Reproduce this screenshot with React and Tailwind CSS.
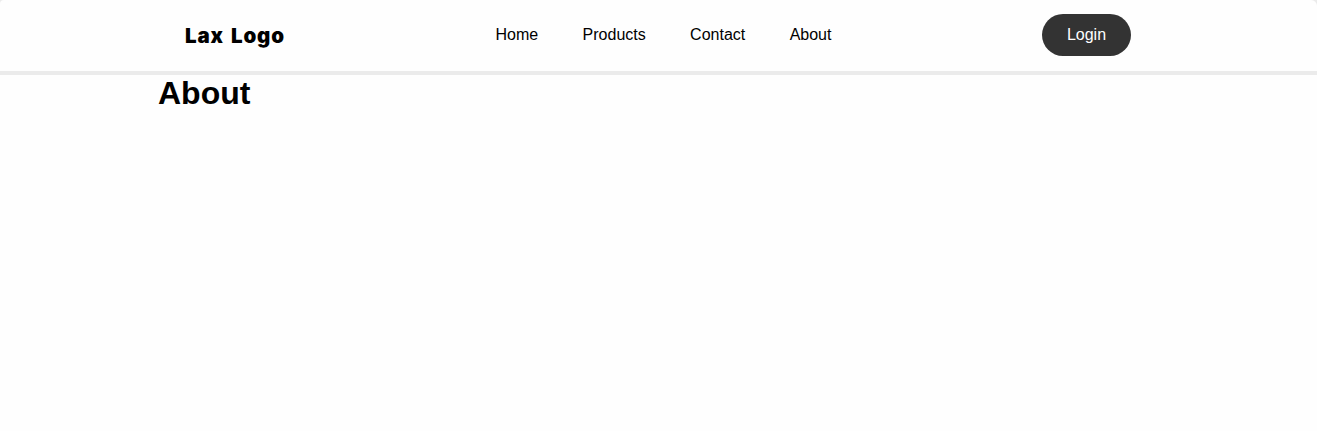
const links = ["Home", "Products", "Contact", "About"];

export default function App() {
  return (
    <div className="min-h-screen bg-[#ebebeb] font-['Liberation_Sans',Arial,sans-serif] text-black">
      <div className="min-h-screen rounded-tl-[4px] rounded-tr-[6px] bg-[#fefefe]">
        <header className="h-[75px] border-b-4 border-[#ebebeb]">
          <div className="flex h-[70px] items-center pl-[185px] pr-[186px]">
            <a className="w-[310.5px] pt-[2px] font-['Inter','Arial_Black',sans-serif] text-[20.5px] leading-[28px] font-black tracking-[0.8px] [word-spacing:2.5px] whitespace-nowrap">
              Lax Logo
            </a>
            <nav className="flex grow gap-[44.4px] text-base">
              {links.map((label) => (
                <a key={label}>{label}</a>
              ))}
            </nav>
            <button className="h-[42px] w-[89px] rounded-full bg-[#333333] text-base text-white">Login</button>
          </div>
        </header>
        <main className="pl-[158px]">
          <h1 className="text-[32px] leading-[37px] font-bold">About</h1>
        </main>
      </div>
    </div>
  );
}
